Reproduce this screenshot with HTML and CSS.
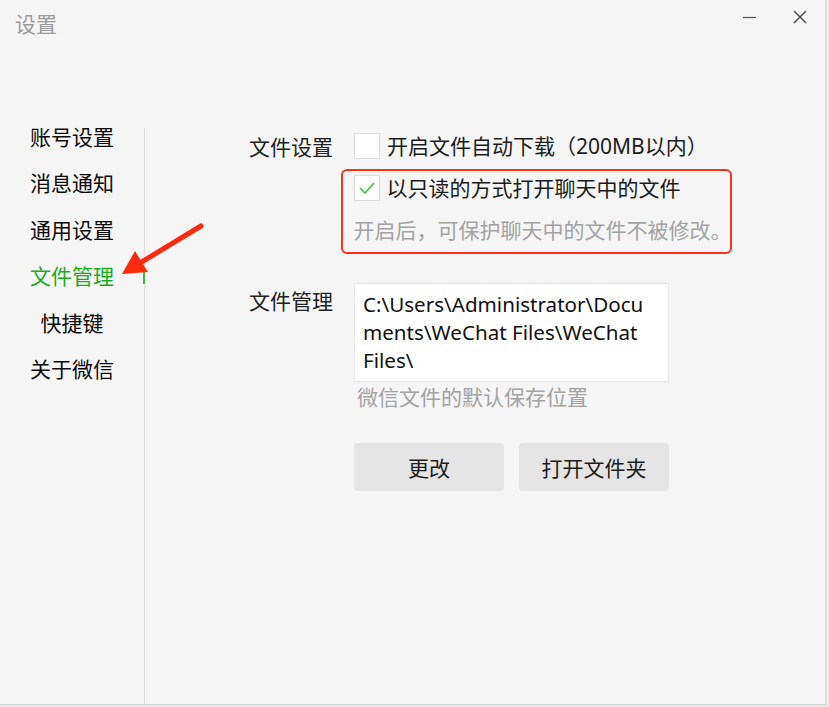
FILE: index.html
```html
<!DOCTYPE html>
<html lang="zh-CN">
<head>
<meta charset="utf-8">
<title>设置</title>
<link rel="stylesheet" href="styles.css">
</head>
<body>
<div class="window">
  <header class="titlebar">
    <div class="title">设置</div>
    <div class="controls">
      <span class="ctl min"><svg width="14" height="14" viewBox="0 0 14 14"><line x1="0" y1="7.5" x2="13" y2="7.5" stroke="#555" stroke-width="1.2"/></svg></span>
      <span class="ctl close"><svg width="14" height="14" viewBox="0 0 14 14"><path d="M1 1 L13 13 M13 1 L1 13" stroke="#444" stroke-width="1.4" fill="none"/></svg></span>
    </div>
  </header>
  <div class="main">
    <nav class="sidebar">
      <ul class="menu">
        <li class="item">账号设置</li>
        <li class="item">消息通知</li>
        <li class="item">通用设置</li>
        <li class="item active">文件管理</li>
        <li class="item">快捷键</li>
        <li class="item">关于微信</li>
      </ul>
    </nav>
    <section class="content">
      <div class="row">
        <div class="label">文件设置</div>
        <div class="field">
          <label class="option">
            <span class="checkbox"></span>
            <span class="option-text">开启文件自动下载（200MB以内）</span>
          </label>
          <div class="highlight">
            <label class="option">
              <span class="checkbox checked"><svg width="18" height="14" viewBox="0 0 18 14"><path d="M2 7 L7 12 L16 2" stroke="#3fbf4a" stroke-width="1.6" fill="none"/></svg></span>
              <span class="option-text">以只读的方式打开聊天中的文件</span>
            </label>
            <div class="hint hint-inbox">开启后，可保护聊天中的文件不被修改。</div>
          </div>
        </div>
      </div>
      <div class="row row-path">
        <div class="label label-path">文件管理</div>
        <div class="field">
          <div class="pathbox">C:\Users\Administrator\Documents\WeChat Files\WeChat Files\</div>
          <div class="hint hint-path">微信文件的默认保存位置</div>
          <div class="buttons">
            <button class="btn">更改</button>
            <button class="btn">打开文件夹</button>
          </div>
        </div>
      </div>
    </section>
  </div>
  <svg class="arrow" width="829" height="707" viewBox="0 0 829 707">
    <line x1="201" y1="226" x2="140" y2="263" stroke="#fa2a0c" stroke-width="5" stroke-linecap="round"/>
    <polygon points="122,274 135,251 148,272" fill="#fa2a0c"/>
  </svg>
</div>
</body>
</html>
```

FILE: styles.css
```css
* { box-sizing: border-box; }
html, body { margin: 0; padding: 0; }
body {
  width: 829px;
  height: 707px;
  background: #e9e9e9;
  font-family: "Noto Sans", "Noto Sans CJK SC", sans-serif;
  color: #1c1c1c;
  overflow: hidden;
}
.window {
  position: relative;
  width: 826px;
  height: 705px;
  background: #f5f5f5;
  border-right: 1px solid #d4d4d4;
  border-bottom: 1px solid #d0d0d0;
  display: flex;
  flex-direction: column;
}
.titlebar {
  height: 128px;
  display: flex;
  justify-content: space-between;
  align-items: flex-start;
  flex: none;
}
.title {
  margin: 10px 0 0 15px;
  font-size: 21px;
  line-height: 28px;
  color: #9a9a9a;
}
.controls {
  display: flex;
  gap: 36px;
  margin: 10px 18px 0 0;
}
.ctl { display: block; width: 14px; height: 14px; }
.ctl svg { display: block; }
.main {
  flex: 1;
  display: flex;
}
.sidebar {
  width: 145px;
  flex: none;
  border-right: 1px solid #dedede;
}
.menu {
  list-style: none;
  margin: -14px 0 0 30px;
  padding: 0;
  width: 84px;
}
.item {
  position: relative;
  height: 46.4px;
  line-height: 46.4px;
  text-align: center;
  font-size: 21px;
  color: #0a0a0a;
  white-space: nowrap;
}
.item.active { color: #1aad19; }
.item.active::after {
  content: "";
  position: absolute;
  left: 113px;
  top: 15px;
  width: 2px;
  height: 16px;
  background: #2ec23a;
}
.content {
  flex: 1;
  padding: 5px 0 0 104px;
}
.row {
  display: grid;
  grid-template-columns: 105px auto;
}
.label {
  font-size: 21px;
  line-height: 28px;
  color: #222;
  white-space: nowrap;
}
.option {
  display: flex;
  align-items: center;
  gap: 7px;
  height: 26px;
}
.checkbox {
  width: 26px;
  height: 26px;
  flex: none;
  background: #fff;
  border: 1px solid #dcdcdc;
  display: flex;
  align-items: center;
  justify-content: center;
}
.option-text {
  font-size: 21px;
  line-height: 26px;
  color: #1c1c1c;
  white-space: nowrap;
}
.highlight {
  margin: 10px 0 0 -13px;
  width: 391px;
  height: 85px;
  border: 2.5px solid #f5321a;
  border-radius: 6px;
  padding: 3.5px 0 0 10.5px;
}
.hint {
  color: #a3a3a3;
  font-size: 21px;
  white-space: nowrap;
}
.hint-inbox {
  margin-top: 16px;
  line-height: 26px;
}
.row-path { margin-top: 29px; }
.label-path { line-height: 36px; }
.pathbox {
  width: 315px;
  height: 99px;
  background: #fff;
  border: 1px solid #e6e6e6;
  padding: 6px 8px 0 8px;
  font-family: "Noto Sans", "Noto Sans CJK SC", sans-serif;
  font-size: 20.6px;
  line-height: 28px;
  color: #111;
  overflow-wrap: anywhere;
}
.hint-path {
  margin: 2px 0 0 3px;
  line-height: 26px;
}
.buttons {
  display: flex;
  gap: 15px;
  margin-top: 33px;
}
.btn {
  width: 150px;
  height: 48px;
  border: none;
  border-radius: 4px;
  background: #e5e5e5;
  font-family: "Noto Sans", "Noto Sans CJK SC", sans-serif;
  font-size: 21px;
  color: #1c1c1c;
  padding: 0;
}
.arrow {
  position: absolute;
  left: 0;
  top: 0;
  pointer-events: none;
}
```
